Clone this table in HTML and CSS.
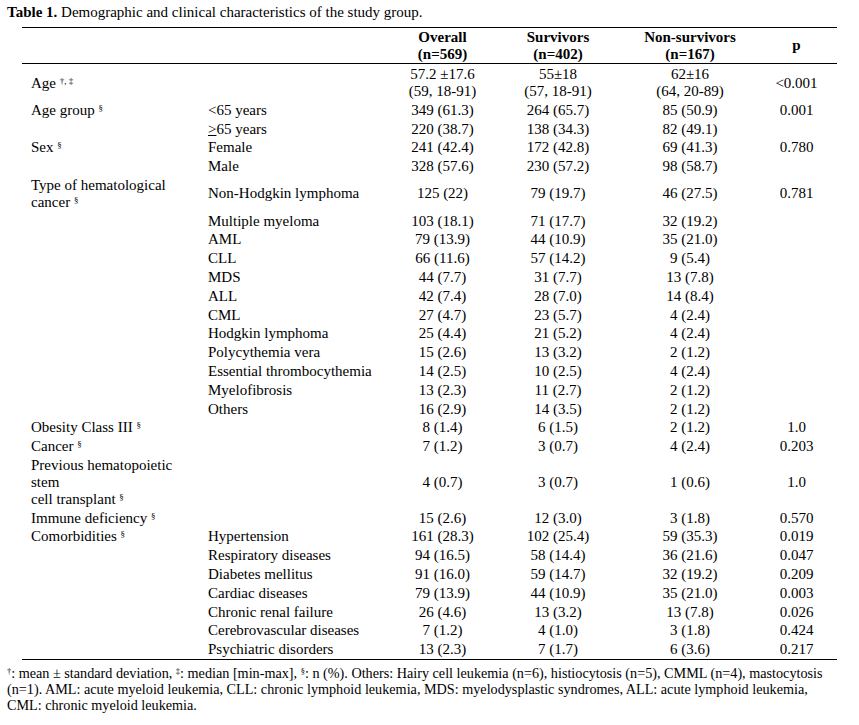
FILE: index.html
```html
<!DOCTYPE html>
<html>
<head>
<meta charset="utf-8">
<link rel="stylesheet" href="styles.css">
</head>
<body>
<div class="page">
  <p class="caption"><b>Table 1.</b> Demographic and clinical characteristics of the study group.</p>
  <table class="t">
    <colgroup>
      <col class="c1"><col class="c2"><col class="c3"><col class="c4"><col class="c5"><col class="c6">
    </colgroup>
    <thead>
      <tr><th></th><th></th><th>Overall<br>(n=569)</th><th>Survivors<br>(n=402)</th><th>Non-survivors<br>(n=167)</th><th class="p">p</th></tr>
    </thead>
    <tbody>
      <tr class="age"><td class="lbl">Age <sup>†, ‡</sup></td><td></td><td>57.2 ±17.6<br>(59, 18-91)</td><td>55±18<br>(57, 18-91)</td><td>62±16<br>(64, 20-89)</td><td class="p">&lt;0.001</td></tr>
      <tr><td class="lbl">Age group <sup>§</sup></td><td class="sub">&lt;65 years</td><td>349 (61.3)</td><td>264 (65.7)</td><td>85 (50.9)</td><td class="p">0.001</td></tr>
      <tr><td></td><td class="sub"><u>&gt;</u>65 years</td><td>220 (38.7)</td><td>138 (34.3)</td><td>82 (49.1)</td><td class="p"></td></tr>
      <tr><td class="lbl">Sex <sup>§</sup></td><td class="sub">Female</td><td>241 (42.4)</td><td>172 (42.8)</td><td>69 (41.3)</td><td class="p">0.780</td></tr>
      <tr><td></td><td class="sub">Male</td><td>328 (57.6)</td><td>230 (57.2)</td><td>98 (58.7)</td><td class="p"></td></tr>
      <tr><td class="lbl">Type of hematological<br>cancer <sup>§</sup></td><td class="sub">Non-Hodgkin lymphoma</td><td>125 (22)</td><td>79 (19.7)</td><td>46 (27.5)</td><td class="p">0.781</td></tr>
      <tr><td></td><td class="sub">Multiple myeloma</td><td>103 (18.1)</td><td>71 (17.7)</td><td>32 (19.2)</td><td class="p"></td></tr>
      <tr><td></td><td class="sub">AML</td><td>79 (13.9)</td><td>44 (10.9)</td><td>35 (21.0)</td><td class="p"></td></tr>
      <tr><td></td><td class="sub">CLL</td><td>66 (11.6)</td><td>57 (14.2)</td><td>9 (5.4)</td><td class="p"></td></tr>
      <tr><td></td><td class="sub">MDS</td><td>44 (7.7)</td><td>31 (7.7)</td><td>13 (7.8)</td><td class="p"></td></tr>
      <tr><td></td><td class="sub">ALL</td><td>42 (7.4)</td><td>28 (7.0)</td><td>14 (8.4)</td><td class="p"></td></tr>
      <tr><td></td><td class="sub">CML</td><td>27 (4.7)</td><td>23 (5.7)</td><td>4 (2.4)</td><td class="p"></td></tr>
      <tr><td></td><td class="sub">Hodgkin lymphoma</td><td>25 (4.4)</td><td>21 (5.2)</td><td>4 (2.4)</td><td class="p"></td></tr>
      <tr><td></td><td class="sub">Polycythemia vera</td><td>15 (2.6)</td><td>13 (3.2)</td><td>2 (1.2)</td><td class="p"></td></tr>
      <tr><td></td><td class="sub">Essential thrombocythemia</td><td>14 (2.5)</td><td>10 (2.5)</td><td>4 (2.4)</td><td class="p"></td></tr>
      <tr><td></td><td class="sub">Myelofibrosis</td><td>13 (2.3)</td><td>11 (2.7)</td><td>2 (1.2)</td><td class="p"></td></tr>
      <tr><td></td><td class="sub">Others</td><td>16 (2.9)</td><td>14 (3.5)</td><td>2 (1.2)</td><td class="p"></td></tr>
      <tr><td class="lbl">Obesity Class III <sup>§</sup></td><td></td><td>8 (1.4)</td><td>6 (1.5)</td><td>2 (1.2)</td><td class="p">1.0</td></tr>
      <tr><td class="lbl">Cancer <sup>§</sup></td><td></td><td>7 (1.2)</td><td>3 (0.7)</td><td>4 (2.4)</td><td class="p">0.203</td></tr>
      <tr><td class="lbl">Previous hematopoietic<br>stem<br>cell transplant <sup>§</sup></td><td></td><td>4 (0.7)</td><td>3 (0.7)</td><td>1 (0.6)</td><td class="p">1.0</td></tr>
      <tr><td class="lbl">Immune deficiency <sup>§</sup></td><td></td><td>15 (2.6)</td><td>12 (3.0)</td><td>3 (1.8)</td><td class="p">0.570</td></tr>
      <tr><td class="lbl">Comorbidities <sup>§</sup></td><td class="sub">Hypertension</td><td>161 (28.3)</td><td>102 (25.4)</td><td>59 (35.3)</td><td class="p">0.019</td></tr>
      <tr><td></td><td class="sub">Respiratory diseases</td><td>94 (16.5)</td><td>58 (14.4)</td><td>36 (21.6)</td><td class="p">0.047</td></tr>
      <tr><td></td><td class="sub">Diabetes mellitus</td><td>91 (16.0)</td><td>59 (14.7)</td><td>32 (19.2)</td><td class="p">0.209</td></tr>
      <tr><td></td><td class="sub">Cardiac diseases</td><td>79 (13.9)</td><td>44 (10.9)</td><td>35 (21.0)</td><td class="p">0.003</td></tr>
      <tr><td></td><td class="sub">Chronic renal failure</td><td>26 (4.6)</td><td>13 (3.2)</td><td>13 (7.8)</td><td class="p">0.026</td></tr>
      <tr><td></td><td class="sub">Cerebrovascular diseases</td><td>7 (1.2)</td><td>4 (1.0)</td><td>3 (1.8)</td><td class="p">0.424</td></tr>
      <tr><td></td><td class="sub">Psychiatric disorders</td><td>13 (2.3)</td><td>7 (1.7)</td><td>6 (3.6)</td><td class="p">0.217</td></tr>
    </tbody>
  </table>
  <p class="notes"><sup>†</sup>: mean ± standard deviation, <sup>‡</sup>: median [min-max], <sup>§</sup>: n (%). Others: Hairy cell leukemia (n=6), histiocytosis (n=5), CMML (n=4), mastocytosis<br>(n=1). AML: acute myeloid leukemia, CLL: chronic lymphoid leukemia, MDS: myelodysplastic syndromes, ALL: acute lymphoid leukemia,<br>CML: chronic myeloid leukemia.</p>
</div>
</body>
</html>
```
FILE: styles.css
```css
html, body {
  margin: 0;
  padding: 0;
  background: #fff;
}
.page {
  font-family: "Liberation Serif", "Times New Roman", serif;
  color: #000;
  width: 859px;
}
.caption {
  margin: 4px 0 7px 7px;
  font-size: 15px;
  line-height: 16px;
  white-space: nowrap;
}
.t {
  margin-left: 22px;
  width: 815px;
  table-layout: fixed;
  border-collapse: collapse;
  font-size: 15px;
  line-height: 17px;
  border-top: 1px solid #000;
  border-bottom: 1px solid #000;
}
.c1 { width: 178px; }
.c2 { width: 185px; }
.c3 { width: 115px; }
.c4 { width: 116px; }
.c5 { width: 148px; }
.c6 { width: 73px; }
.t th {
  font-weight: bold;
  text-align: center;
  vertical-align: middle;
  padding: 0.5px 0 0;
  border-bottom: 1px solid #000;
}
.t td {
  padding: 0.9px 0;
  text-align: center;
  vertical-align: middle;
  white-space: nowrap;
}
.t td.lbl {
  text-align: left;
  padding-left: 9px;
}
.t td.sub {
  text-align: left;
  padding-left: 8px;
}
.t .p {
  padding-right: 8px;
}
.t tr.age td {
  padding-top: 2.5px;
}
sup {
  font-size: 0.6em;
  line-height: 0;
  vertical-align: 0.5em;
}
.notes {
  margin: 5px 0 0 7px;
  font-size: 14.2px;
  line-height: 16px;
  white-space: nowrap;
}
```
